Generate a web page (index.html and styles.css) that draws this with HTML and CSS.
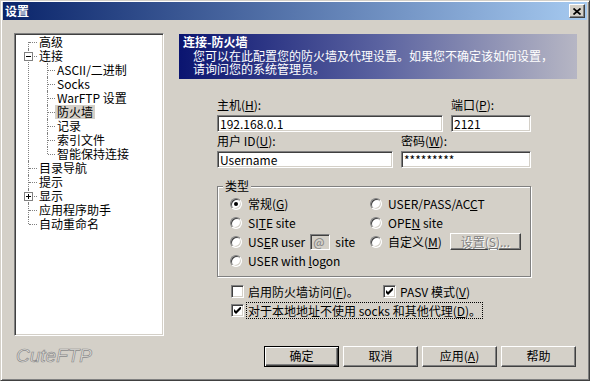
FILE: index.html
```html
<!DOCTYPE html>
<html lang="zh-CN">
<head>
    <meta charset="UTF-8">
    <title>设置</title>
    <link rel="stylesheet" href="styles.css">
</head>
<body>
    <div class="window">
        <div class="titlebar">
            <span class="caption">设置</span>
            <span class="close">
                <svg width="8" height="7" viewBox="0 0 8 7"><path d="M0.5 0.5 L7.5 6.5 M7.5 0.5 L0.5 6.5" stroke="#000" stroke-width="1.7" fill="none"/></svg>
            </span>
        </div>

        <div class="main">
            <!-- 左侧树 -->
            <div class="tree">
                <ul class="nodes root">
                    <li><span class="label">高级</span></li>
                    <li><span class="toggle"></span><span class="label">连接</span>
                        <ul class="nodes sub">
                            <li><span class="label">ASCII/二进制</span></li>
                            <li><span class="label">Socks</span></li>
                            <li><span class="label">WarFTP 设置</span></li>
                            <li><span class="label selected">防火墙</span></li>
                            <li><span class="label">记录</span></li>
                            <li><span class="label">索引文件</span></li>
                            <li><span class="label">智能保持连接</span></li>
                        </ul>
                    </li>
                    <li><span class="label">目录导航</span></li>
                    <li><span class="label">提示</span></li>
                    <li><span class="toggle plus"></span><span class="label">显示</span></li>
                    <li><span class="label">应用程序助手</span></li>
                    <li><span class="label">自动重命名</span></li>
                </ul>
            </div>

            <div class="pane">
                <div class="banner">
                    <div class="banner-title">连接-防火墙</div>
                    <div class="banner-text">您可以在此配置您的防火墙及代理设置。如果您不确定该如何设置，<br>请询问您的系统管理员。</div>
                </div>

                <div class="form">
                    <div class="field-row">
                        <div class="field host">
                            <label>主机(<u>H</u>):</label>
                            <input class="text-input" type="text" value="192.168.0.1">
                        </div>
                        <div class="field port">
                            <label>端口(<u>P</u>):</label>
                            <input class="text-input" type="text" value="2121">
                        </div>
                    </div>
                    <div class="field-row">
                        <div class="field user">
                            <label>用户 ID(<u>U</u>):</label>
                            <input class="text-input" type="text" value="Username">
                        </div>
                        <div class="field pass">
                            <label>密码(<u>W</u>):</label>
                            <input class="text-input" type="text" value="*********">
                        </div>
                    </div>

                    <fieldset class="group">
                        <legend>类型</legend>
                        <div class="radios">
                            <div class="option"><span class="radio checked"></span><span>常规(<u>G</u>)</span></div>
                            <div class="option"><span class="radio"></span><span>USER/PASS/AC<u>C</u>T</span></div>
                            <div class="option"><span class="radio"></span><span>SI<u>T</u>E site</span></div>
                            <div class="option"><span class="radio"></span><span>OPE<u>N</u> site</span></div>
                            <div class="option"><span class="radio"></span><span>US<u>E</u>R user</span><span class="mini-input">@</span><span>site</span></div>
                            <div class="option"><span class="radio"></span><span>自定义(<u>M</u>)</span><span class="btn small disabled">设置(<u>S</u>)...</span></div>
                            <div class="option wide"><span class="radio"></span><span>USER with <u>l</u>ogon</span></div>
                        </div>
                    </fieldset>

                    <div class="checks">
                        <div class="option"><span class="check"></span><span>启用防火墙访问(<u>F</u>)。</span></div>
                        <div class="option"><span class="check on"><svg width="7" height="7" viewBox="0 0 7 7"><polygon points="0,2 2,4 7,-1 7,2 2,7 0,5" fill="#000"/></svg></span><span>PASV 模式(<u>V</u>)</span></div>
                        <div class="option wide"><span class="check on"><svg width="7" height="7" viewBox="0 0 7 7"><polygon points="0,2 2,4 7,-1 7,2 2,7 0,5" fill="#000"/></svg></span><span class="focus">对于本地地址不使用 socks 和其他代理(<u>D</u>)。</span></div>
                    </div>
                </div>
            </div>
        </div>

        <div class="footer">
            <span class="brand">CuteFTP</span>
            <div class="buttons">
                <span class="btn default">确定</span>
                <span class="btn">取消</span>
                <span class="btn"><span>应用(<u>A</u>)</span></span>
                <span class="btn">帮助</span>
            </div>
        </div>
    </div>
</body>
</html>
```

FILE: styles.css
```css
* {
    margin: 0;
    padding: 0;
    box-sizing: border-box;
}

body {
    font: 12px "Noto Sans CJK SC", "Liberation Sans", sans-serif;
    color: #000;
    background: #d4d0c8;
}

u {
    text-underline-offset: 1px;
}

.window {
    width: 590px;
    height: 381px;
    display: flex;
    flex-direction: column;
    padding: 0 2px 2px 2px;
    background: #d4d0c8;
    border: 1px solid;
    border-color: #d4d0c8 #404040 #404040 #d4d0c8;
    box-shadow: inset 1px 1px #fff, inset -1px -1px #808080;
}

/* 标题栏 */
.titlebar {
    height: 18px;
    margin-top: 1px;
    display: flex;
    align-items: center;
    padding: 0 2px 0 2px;
    background: linear-gradient(to right, #0a246a, #a6caf0);
}

.caption {
    color: #fff;
    font-weight: bold;
    line-height: 14px;
}

.close {
    margin-left: auto;
    width: 16px;
    height: 14px;
    display: flex;
    align-items: center;
    justify-content: center;
    background: #d4d0c8;
    border: 1px solid;
    border-color: #fff #404040 #404040 #fff;
    box-shadow: inset -1px -1px #808080;
}

.main {
    display: flex;
    gap: 15px;
    padding: 13px 0 0 11px;
}

/* 左侧树 */
.tree {
    width: 150px;
    height: 303px;
    padding-top: 1px;
    background: #fff;
    border: 1px solid;
    border-color: #808080 #fff #fff #808080;
    box-shadow: inset 1px 1px #404040, inset -1px -1px #d4d0c8;
}

.nodes {
    list-style: none;
}

.nodes li {
    position: relative;
    padding-left: 22px;
}

.nodes li::before {
    content: "";
    position: absolute;
    left: 13px;
    top: 0;
    bottom: 0;
    border-left: 1px dotted #808080;
}

.nodes li::after {
    content: "";
    position: absolute;
    left: 14px;
    top: 7px;
    width: 8px;
    border-top: 1px dotted #808080;
}

.root > li:first-child::before {
    top: 7px;
}

.nodes li:last-child::before {
    bottom: auto;
    height: 7px;
}

.sub {
    margin-left: -4px;
}

.sub li::before {
    left: 14px;
}

.sub li::after {
    left: 15px;
    width: 7px;
}

.label {
    display: block;
    width: max-content;
    height: 14px;
    line-height: 14px;
    padding: 0 2px;
    white-space: nowrap;
}

.label.selected {
    background: #d4d0c8;
}

.toggle {
    position: absolute;
    left: 9px;
    top: 3px;
    width: 9px;
    height: 9px;
    z-index: 1;
    background: #fff;
    border: 1px solid #808080;
}

.toggle::before {
    content: "";
    position: absolute;
    left: 1px;
    top: 3px;
    width: 5px;
    height: 1px;
    background: #000;
}

.toggle.plus::after {
    content: "";
    position: absolute;
    left: 3px;
    top: 1px;
    width: 1px;
    height: 5px;
    background: #000;
}

/* 右侧 */
.pane {
    width: 398px;
    margin-top: 1px;
}

.banner {
    height: 45px;
    padding: 1px 4px;
    color: #fff;
    background: linear-gradient(to right, #0a1470, #5a62a0 50%, #b6b6c4);
}

.banner-title {
    font-weight: bold;
    line-height: 14px;
}

.banner-text {
    padding-left: 10px;
    line-height: 13px;
}

.form {
    width: 314px;
    margin: 19px 0 0 38px;
}

.field-row {
    display: flex;
    gap: 8px;
    margin-bottom: 2px;
}

.field {
    display: flex;
    flex-direction: column;
    gap: 3px;
}

.field label {
    line-height: 14px;
}

.host { width: 226px; }
.port { width: 80px; }
.user { width: 176px; }
.pass { width: 130px; }

.text-input {
    width: 100%;
    height: 17px;
    padding: 0 2px;
    font: 12px "Noto Sans CJK SC", "Liberation Sans", sans-serif;
    color: #000;
    background: #fff;
    outline: none;
    border: 1px solid;
    border-color: #808080 #fff #fff #808080;
    box-shadow: inset 1px 1px #404040, inset -1px -1px #d4d0c8;
}

.group {
    width: 314px;
    min-width: 0;
    margin-top: 11px;
    padding: 0 0 6px 12px;
    border: 1px solid #808080;
    box-shadow: inset 1px 1px #fff, 1px 1px #fff;
}

.group legend {
    margin-left: -7px;
    padding: 0 2px;
    line-height: 14px;
    background: #d4d0c8;
}

.radios {
    display: grid;
    grid-template-columns: 140px auto;
    grid-auto-rows: 19px;
    align-items: center;
    margin-top: 1px;
}

.option {
    display: flex;
    align-items: center;
    gap: 6px;
    white-space: nowrap;
    line-height: 14px;
}

.option.wide {
    grid-column: 1 / 3;
}

.radio {
    width: 12px;
    height: 12px;
    flex: none;
    position: relative;
    border-radius: 50%;
    background: #fff;
    border: 1px solid;
    border-color: #808080 #fff #fff #808080;
    box-shadow: inset 1px 1px #404040, inset -1px -1px #d4d0c8;
}

.radio.checked::after {
    content: "";
    position: absolute;
    left: 3px;
    top: 3px;
    width: 4px;
    height: 4px;
    border-radius: 50%;
    background: #000;
}

.mini-input {
    width: 20px;
    height: 16px;
    padding-left: 2px;
    line-height: 14px;
    color: #808080;
    background: #d4d0c8;
    border: 1px solid;
    border-color: #808080 #fff #fff #808080;
    box-shadow: inset 1px 1px #404040, inset -1px -1px #d4d0c8;
    margin: 0 -1px;
}

.btn {
    width: 75px;
    height: 21px;
    display: flex;
    align-items: center;
    justify-content: center;
    line-height: 14px;
    background: #d4d0c8;
    border: 1px solid;
    border-color: #fff #404040 #404040 #fff;
    box-shadow: inset -1px -1px #808080, inset 1px 1px #d4d0c8;
}

.btn.default {
    border: 1px solid #000;
    box-shadow: inset 1px 1px #fff, inset -1px -1px #404040, inset -2px -2px #808080;
}

.btn.small {
    width: 71px;
    height: 17px;
    margin-left: 2px;
}

.btn.disabled {
    color: #808080;
    text-shadow: 1px 1px #fff;
}

.checks {
    margin-top: 5px;
    padding-left: 14px;
    display: grid;
    grid-template-columns: 152px auto;
    grid-auto-rows: 19px;
    align-items: center;
}

.checks .option {
    gap: 4px;
}

.check {
    width: 13px;
    height: 13px;
    flex: none;
    display: flex;
    align-items: center;
    justify-content: center;
    background: #fff;
    border: 1px solid;
    border-color: #808080 #fff #fff #808080;
    box-shadow: inset 1px 1px #404040, inset -1px -1px #d4d0c8;
}

.focus {
    padding: 1px 1px 0;
    margin-left: -1px;
    outline: 1px dotted #000;
}

/* 底部 */
.footer {
    display: flex;
    align-items: center;
    margin-top: 9px;
    padding: 0 11px 0 13px;
}

.brand {
    font: italic 19px "Liberation Sans", sans-serif;
    color: #e6e4e0;
    -webkit-text-stroke: 0.7px #8a8a8a;
}

.buttons {
    margin-left: auto;
    display: flex;
    gap: 4px;
}
```
